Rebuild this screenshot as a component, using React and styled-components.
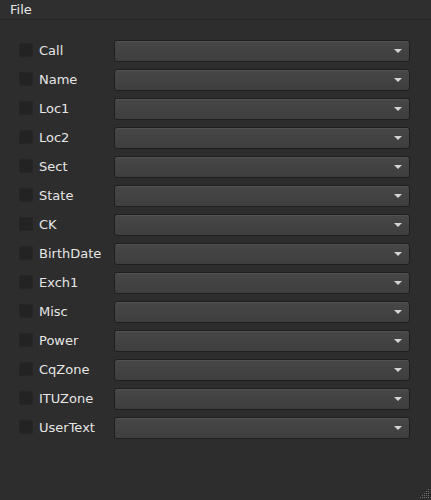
import React from 'react'
import styled, { createGlobalStyle } from 'styled-components'

const fields = [
  'Call', 'Name', 'Loc1', 'Loc2', 'Sect', 'State', 'CK', 'BirthDate',
  'Exch1', 'Misc', 'Power', 'CqZone', 'ITUZone', 'UserText',
]

const GlobalStyle = createGlobalStyle`
  html, body {
    margin: 0;
    padding: 0;
    background: #2d2d2d;
  }
  body {
    font-family: "DejaVu Sans", "Liberation Sans", sans-serif;
    font-size: 13px;
    color: #e6e6e6;
  }
`

function App() {
  return (
    <Window>
      <GlobalStyle />
      <MenuBar>
        <MenuItem>File</MenuItem>
      </MenuBar>

      <Form>
        {fields.map((name) => (
          <Row key={name}>
            <Check />
            <Label>{name}</Label>
            <Combo>
              <Arrow />
            </Combo>
          </Row>
        ))}
      </Form>

      <Grip>
        <svg width="10" height="10" viewBox="0 0 10 10">
          {[[8, 0], [6, 2], [8, 2], [4, 4], [6, 4], [8, 4], [2, 6], [4, 6], [6, 6], [8, 6], [0, 8], [2, 8], [4, 8], [6, 8], [8, 8]].map(([x, y]) => (
            <rect key={`${x}-${y}`} x={x} y={y} width="1" height="1" fill="#6e6e6e" />
          ))}
        </svg>
      </Grip>
    </Window>
  )
}

const Window = styled.div`
  position: relative;
  width: 431px;
  height: 500px;
  background: #2d2d2d;
  overflow: hidden;
`

const MenuBar = styled.div`
  display: flex;
  align-items: center;
  height: 19px;
  padding: 0 4px;
  background: #2f2f2f;
  border-bottom: 1px solid #272727;
`

const MenuItem = styled.div`
  padding: 0 6px;
  line-height: 18px;
  color: #e8e8e8;
`

const Form = styled.div`
  display: flex;
  flex-direction: column;
  gap: 7px;
  padding: 20px 21px 0 19px;
`

const Row = styled.div`
  display: flex;
  align-items: center;
  height: 22px;
`

const Check = styled.div`
  width: 14px;
  height: 14px;
  margin-top: -2px;
  background: #232323;
  border: 1px solid #262626;
  box-sizing: border-box;
`

const Label = styled.span`
  width: 75px;
  margin-left: 6px;
  padding-bottom: 2px;
  color: #e6e6e6;
  white-space: nowrap;
`

const Combo = styled.div`
  display: flex;
  align-items: center;
  justify-content: flex-end;
  flex: 1;
  height: 22px;
  box-sizing: border-box;
  padding-right: 7px;
  border: 1px solid #1f1f1f;
  border-radius: 3px;
  background: linear-gradient(#474747, #3e3e3e);
  box-shadow: inset 0 1px 0 rgba(255, 255, 255, 0.06);
`

const Arrow = styled.div`
  width: 0;
  height: 0;
  border-left: 4px solid transparent;
  border-right: 4px solid transparent;
  border-top: 4px solid #d4d4d4;
`

const Grip = styled.div`
  position: absolute;
  right: 1px;
  bottom: 1px;
  line-height: 0;
`

export default App
